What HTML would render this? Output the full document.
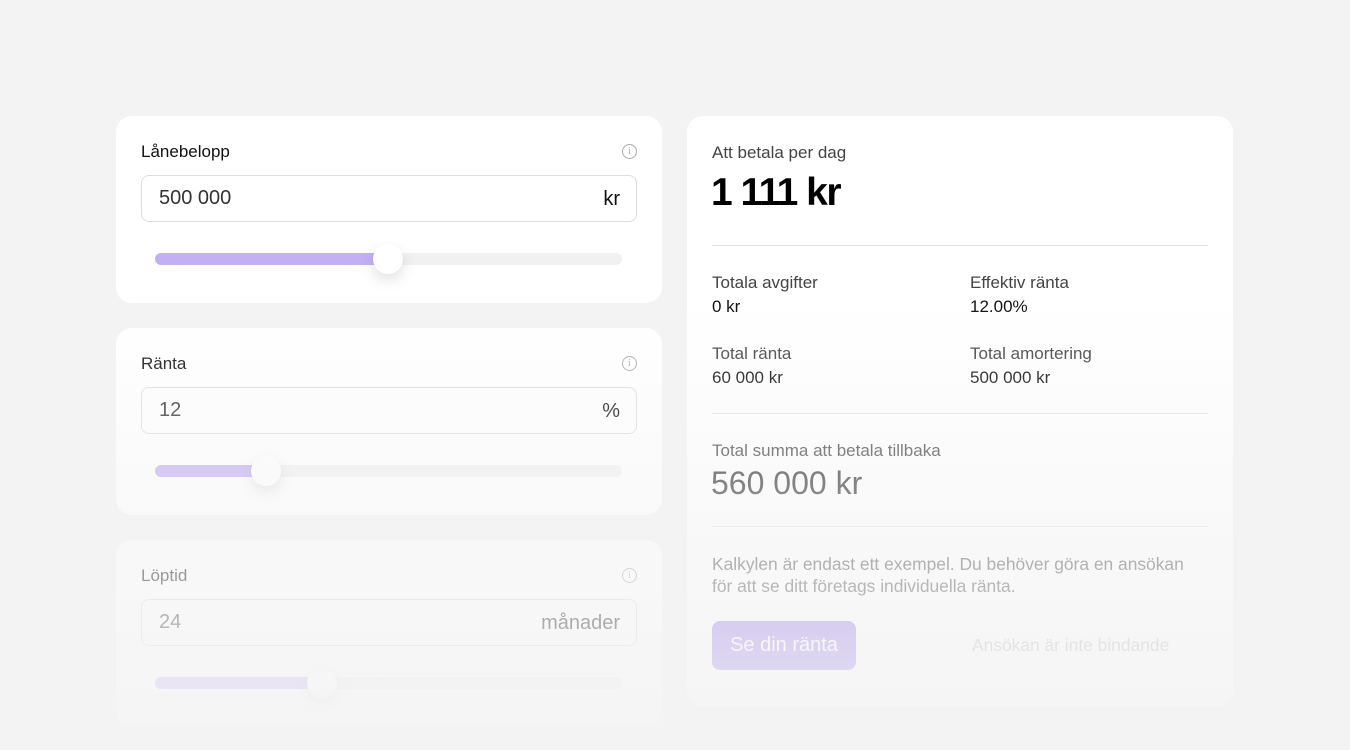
<!DOCTYPE html>
<html><head><meta charset="utf-8"><style>
*{box-sizing:border-box;margin:0;padding:0}
body{width:1350px;height:750px;background:#f3f3f3;font-family:"Liberation Sans",sans-serif;position:relative;overflow:hidden;color:#111}
.card{position:absolute;background:#fff;border-radius:16px}
.lbl{position:absolute;left:25px;top:26px;font-size:17px;color:#111}
.info{position:absolute;right:25px;top:28px;width:15px;height:15px;border:1.2px solid #aaa;border-radius:50%;font-size:10px;color:#aaa;text-align:center;line-height:13px;font-family:"Liberation Serif",serif}
.inp{position:absolute;left:25px;top:59px;width:496px;height:47px;border:1px solid #ddd;border-radius:8px;font-size:20px;color:#333;padding:11px 17px}
.inp span{position:absolute;right:16px;top:12px;color:#111}
.track{position:absolute;left:39px;top:137px;width:467px;height:12px;background:#f1f1f1;border-radius:6px}
.fill{position:absolute;left:0;top:0;height:12px;background:#c3b0f3;border-radius:6px}
.knob{position:absolute;top:-9px;width:30px;height:30px;border-radius:50%;background:#fff;box-shadow:0 6px 14px rgba(0,0,0,.12)}
.r{position:absolute;font-size:17px;color:#444}
.v{position:absolute;font-size:17px;color:#111}
.hr{position:absolute;left:25px;width:496px;height:1px;background:#e3e3e3}
.fade{position:absolute;left:0;top:0;width:1350px;height:750px;background:linear-gradient(to bottom,rgba(243,243,243,0) 0px,rgba(243,243,243,0) 300px,rgba(243,243,243,.5) 520px,rgba(243,243,243,.85) 720px,rgba(243,243,243,.92) 750px)}
</style></head><body>
<div class="card" style="left:116px;top:116px;width:546px;height:187px">
<div class="lbl">Lånebelopp</div><div class="info">i</div>
<div class="inp">500 000<span>kr</span></div>
<div class="track"><div class="fill" style="width:235px"></div><div class="knob" style="left:218px"></div></div>
</div>
<div class="card" style="left:116px;top:328px;width:546px;height:187px">
<div class="lbl">Ränta</div><div class="info">i</div>
<div class="inp">12<span>%</span></div>
<div class="track"><div class="fill" style="width:112px"></div><div class="knob" style="left:96px"></div></div>
</div>
<div class="card" style="left:116px;top:540px;width:546px;height:187px">
<div class="lbl">Löptid</div><div class="info">i</div>
<div class="inp">24<span>månader</span></div>
<div class="track"><div class="fill" style="width:167px"></div><div class="knob" style="left:152px"></div></div>
</div>
<div class="card" style="left:687px;top:116px;width:546px;height:590px">
<div class="r" style="left:25px;top:27px">Att betala per dag</div>
<div style="position:absolute;left:24px;top:55px;font-size:39px;font-weight:bold;letter-spacing:-1.5px;color:#000">1 111 kr</div>
<div class="hr" style="top:129px"></div>
<div class="r" style="left:25px;top:157px">Totala avgifter</div><div class="v" style="left:25px;top:181px">0 kr</div>
<div class="r" style="left:283px;top:157px">Effektiv ränta</div><div class="v" style="left:283px;top:181px">12.00%</div>
<div class="r" style="left:25px;top:228px">Total ränta</div><div class="v" style="left:25px;top:252px">60 000 kr</div>
<div class="r" style="left:283px;top:228px">Total amortering</div><div class="v" style="left:283px;top:252px">500 000 kr</div>
<div class="hr" style="top:297px"></div>
<div class="r" style="left:25px;top:325px">Total summa att betala tillbaka</div>
<div style="position:absolute;left:24px;top:349px;font-size:32px;color:#333">560 000 kr</div>
<div class="hr" style="top:410px"></div>
<div class="r" style="left:25px;top:437px;line-height:22px;color:#555;font-size:17.4px">Kalkylen är endast ett exempel. Du behöver göra en ansökan<br>för att se ditt företags individuella ränta.</div>
<div style="position:absolute;left:25px;top:505px;width:144px;height:49px;border-radius:8px;background:#9b7eea;color:#fff;font-size:20px;text-align:center;line-height:49px">Se din ränta</div>
<div class="r" style="left:285px;top:519px;color:#bbb;font-size:17.4px">Ansökan är inte bindande</div>
</div>
<div class="fade"></div>
</body></html>
